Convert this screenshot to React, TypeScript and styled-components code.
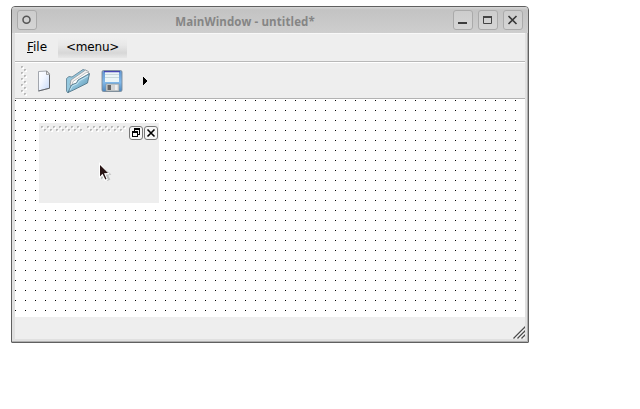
import React from "react";
import styled, { createGlobalStyle } from "styled-components";

const Global = createGlobalStyle`
  * { box-sizing: border-box; }
  body { margin: 0; background: #fff; overflow: hidden; font: 12px "DejaVu Sans", sans-serif; color: #000; }
`;

const Page = styled.div`
  width: 640px;
  height: 409px;
  padding: 6px 0 0 11px;
`;

const Frame = styled.main`
  width: 518px;
  height: 337px;
  display: flex;
  flex-direction: column;
  border: 1px solid #606060;
  border-radius: 4px 4px 1px 1px;
  background: #e0e0e0;
  box-shadow: inset -1px -1px #b0b0b0;
  overflow: hidden;
`;

const TitleBar = styled.header`
  height: 26px;
  flex: none;
  display: flex;
  align-items: flex-start;
  padding: 3px 5px 0;
  gap: 5px;
  background: linear-gradient(#d6d6d6 0, #c3c3c3 3px, #cecece 100%);
`;

const FrameButton = styled.button`
  width: 20px;
  height: 20px;
  flex: none;
  padding: 0;
  border: 1px solid #aaa;
  border-radius: 3px;
  background: linear-gradient(#cdcdcd, #d5d5d5);
  svg { display: block; }
`;

const Title = styled.h1`
  flex: 1;
  margin: 0;
  padding: 1px 0 0;
  text-align: center;
  font: bold 11.5px/22px "Open Sans", sans-serif;
  letter-spacing: 0.1px;
  color: #858585;
`;

const Client = styled.section`
  width: 510px;
  height: 306px;
  flex: none;
  margin-left: 3px;
  display: flex;
  flex-direction: column;
  background: #eee;
`;

const MenuBar = styled.nav`
  height: 29px;
  flex: none;
  display: flex;
  align-items: flex-start;
  padding: 4px 0 0 1px;
  border-top: 1px solid #f8f8f8;
  border-bottom: 1px solid #b8b8b8;
`;

const MenuItem = styled.div<{ $active?: boolean }>`
  width: ${p => (p.$active ? 69 : 40)}px;
  height: 20px;
  margin-right: 2px;
  padding-left: ${p => (p.$active ? 8 : 11)}px;
  line-height: 19px;
  letter-spacing: ${p => (p.$active ? "-0.2px" : "0")};
  white-space: nowrap;
  background: ${p => (p.$active ? "linear-gradient(#eee, #e8e8e8 35%, #d7d7d7 75%, #e8e8e8)" : "none")};
`;

const ToolBar = styled.div`
  height: 37px;
  flex: none;
  display: flex;
  align-items: center;
  padding-left: 5px;
  border-top: 1px solid #fff;
  border-bottom: 1px solid #b3b3b3;
  svg { flex: none; }
`;

const Tool = styled.div<{ $width: number }>`
  width: ${p => p.$width}px;
  height: 34px;
  flex: none;
  display: flex;
  align-items: center;
  justify-content: center;
`;

const Canvas = styled.div`
  height: 218px;
  flex: none;
  padding: 24px;
  background: conic-gradient(from 0deg at 1px 1px, transparent 75%, #000 0) 0 1px / 10px 10px #fff;
`;

const Dock = styled.aside`
  width: 120px;
  height: 80px;
  display: flex;
  align-items: flex-start;
  padding: 3px 0 0 2px;
  background: #eee;
  position: relative;
`;

const DockButtons = styled.div`
  display: flex;
  gap: 1px;
  margin-left: 1px;
`;

const DockButton = styled.button`
  width: 14px;
  height: 14px;
  padding: 0;
  border: 1px solid #777;
  border-radius: 3px;
  background: #f6f6f6;
  svg { display: block; }
`;

const Pointer = styled.svg`
  position: absolute;
  left: 59px;
  top: 38px;
`;

const StatusBar = styled.footer`
  flex: 1;
  display: flex;
  align-items: flex-end;
  justify-content: flex-end;
`;

function Dot({ x, y }: { x: number; y: number }) {
  return (
    <g transform={`translate(${x} ${y})`}>
      <path d="M1 1h2v2H1z" fill="#fff" />
      <path d="M0 0h2v1H1v1H0z" fill="#b8b8b8" />
      <path d="M1 1h1v1H1z" fill="#ddd" />
    </g>
  );
}

const seven = [0, 1, 2, 3, 4, 5, 6];

function ToolGrip() {
  return (
    <svg width="8" height="32" shapeRendering="crispEdges">
      {[0, 1, 2, 3, 4].map(i => (
        <g key={i}><Dot x={1} y={1 + i * 6} /><Dot x={4} y={4 + i * 6} /></g>
      ))}
    </svg>
  );
}

function DockGrip() {
  return (
    <svg width="87" height="7" shapeRendering="crispEdges">
      {[0, 46].map(offset => (
        <g key={offset}>
          {seven.map(i => (
            <g key={i}><Dot x={offset + i * 6} y={0} />{offset + i * 6 < 82 && <Dot x={offset + 3 + i * 6} y={3} />}</g>
          ))}
        </g>
      ))}
    </svg>
  );
}

export default function App() {
  return (
    <>
      <Global />
      <Page>
        <Frame>
          <TitleBar>
            <FrameButton aria-label="Window menu">
              <svg width="18" height="18"><circle cx="8.5" cy="8.8" r="3.5" fill="none" stroke="#555" strokeWidth="1.5" /></svg>
            </FrameButton>
            <Title>MainWindow - untitled*</Title>
            <FrameButton aria-label="Minimize">
              <svg width="18" height="18"><path d="M4 11h9v2H4z" fill="#3c3c3c" /></svg>
            </FrameButton>
            <FrameButton aria-label="Maximize">
              <svg width="18" height="18"><path d="M4.5 5.5h8v7h-8z" fill="none" stroke="#444" /><path d="M4 5h9v2H4z" fill="#444" /></svg>
            </FrameButton>
            <FrameButton aria-label="Close">
              <svg width="18" height="18"><path d="M4.5 5l8 8M12.5 5l-8 8" stroke="#383838" strokeWidth="1.6" /></svg>
            </FrameButton>
          </TitleBar>
          <Client>
            <MenuBar>
              <MenuItem><u>F</u>ile</MenuItem>
              <MenuItem $active>&lt;menu&gt;</MenuItem>
            </MenuBar>
            <ToolBar>
              <ToolGrip />
              <Tool $width={32}>
                <svg width="24" height="24">
                  <defs><linearGradient id="paper" x2="1" y2="1"><stop stopColor="#fff" /><stop offset=".4" stopColor="#f3f7ff" /><stop offset="1" stopColor="#c4d8f8" /></linearGradient></defs>
                  <path d="M6.5 2.5L15 2l2.5 3v14.2L6.5 22z" fill="url(#paper)" stroke="#989da5" strokeWidth=".9" />
                  <path d="M14.5 2v3.5l3-.3z" fill="#f5f5f5" stroke="#858585" strokeWidth=".8" />
                  <path d="M6.5 22L17.5 19.2V6" fill="none" stroke="#65686d" strokeWidth="1" />
                </svg>
              </Tool>
              <Tool $width={36}>
                <svg width="26" height="26">
                  <defs><linearGradient id="folder" x2="1" y2="1"><stop stopColor="#bce1f0" /><stop offset=".5" stopColor="#8cc0d9" /><stop offset="1" stopColor="#4b87a5" /></linearGradient></defs>
                  <path d="M1.5 10.5L4 8.5l3 .5L18 1.5l3 1L7 20l-4 5-1.5-2z" fill="#96c9df" stroke="#668698" strokeWidth=".9" />
                  <path d="M5 17l1-5L20.5 2l3 1.5L22 12 8 19z" fill="#f1f1f1" stroke="#8e969b" strokeWidth=".8" />
                  <path d="M7 16.5l1-3L22 4l2 2-5 8z" fill="#fff" stroke="#adb1b3" strokeWidth=".8" />
                  <path d="M3 24.5L6.5 17l5-2 1.5-3 11.5-6.5-2 9.5-10 5-4 2z" fill="url(#folder)" stroke="#55788a" strokeWidth=".9" />
                  <path d="M5 22l2.5-4.2 4.8-2L14 13l9-5" fill="none" stroke="#d3edf6" strokeWidth=".8" />
                </svg>
              </Tool>
              <Tool $width={32}>
                <svg width="24" height="24">
                  <defs><linearGradient id="disk" x2="0" y2="1"><stop stopColor="#6196d2" /><stop offset=".55" stopColor="#82b9e9" /><stop offset="1" stopColor="#4d88c0" /></linearGradient></defs>
                  <rect x="2" y="1.5" width="20" height="21" rx="1.5" fill="url(#disk)" stroke="#7b8a98" strokeWidth=".9" />
                  <path d="M5 2h14v11H5z" fill="#eaf5f8" />
                  <path d="M4 2h16v1.3H4z" fill="#4646b3" />
                  <path d="M5 5.5h14M5 8.5h14" stroke="#c7d8dc" />
                  <path d="M6 15h13v7H6z" fill="#d1d3d4" stroke="#8a9399" strokeWidth=".6" />
                  <path d="M7.5 16h3.5v5H7.5z" fill="#666" /><path d="M15 16h2.5v5H15z" fill="#eee" />
                </svg>
              </Tool>
              <Tool $width={35}><svg width="5" height="8" shapeRendering="crispEdges"><path d="M0 0h1v1h1v1h1v1h1v2h-1v1h-1v1H1v1H0z" /></svg></Tool>
            </ToolBar>
            <Canvas>
              <Dock>
                <DockGrip />
                <DockButtons>
                  <DockButton aria-label="Float"><svg width="12" height="12" shapeRendering="crispEdges"><path d="M4 1h6v7H8v2H2V4h2zm1 2v1h3v3h1V3zM3 6v3h4V6z" fillRule="evenodd" /></svg></DockButton>
                  <DockButton aria-label="Close panel"><svg width="12" height="12"><path d="M2.5 2.5l7 7m0-7l-7 7" stroke="#000" strokeWidth="1.6" /></svg></DockButton>
                </DockButtons>
                <Pointer width="16" height="22">
                  <path d="M3 4v14.5l4-3 2.5 4.5 2.8-1.5-2-4 3-1z" fill="#777" opacity=".4" />
                  <path d="M1 1v16.5l3.2-2.6 2.7 5.1 3-1.3-2.3-5.2 4.2-.2z" fill="#fff" />
                  <path d="M2 4v11.5l2.5-2.8 2.8 5.8 1.2-.6-2.5-5.6 4-.2z" fill="#281313" />
                </Pointer>
              </Dock>
            </Canvas>
            <StatusBar>
              <svg width="13" height="14"><path d="M1.5 13.5l12-12M5.5 13.5l8-8M9.5 13.5l4-4" stroke="#4b4b4b" strokeWidth="1.4" /><path d="M3 13.5L13 3.5M7 13.5l6-6M11 13.5l2-2" stroke="#fff" strokeWidth=".6" /></svg>
            </StatusBar>
          </Client>
        </Frame>
      </Page>
    </>
  );
}
